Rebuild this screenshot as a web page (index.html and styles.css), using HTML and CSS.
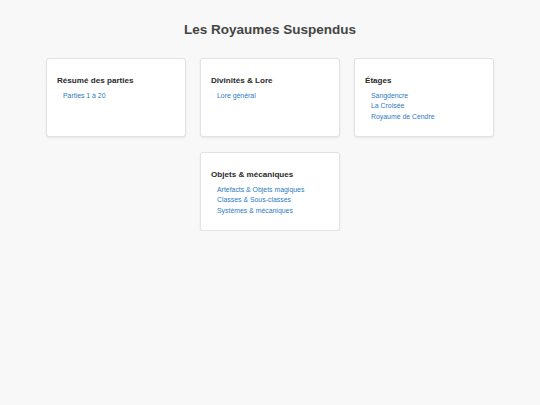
FILE: index.html
```html
<!DOCTYPE html>
<html lang="fr">
<head>
<meta charset="utf-8">
<title>Les Royaumes Suspendus</title>
<link rel="stylesheet" href="styles.css">
</head>
<body>
<h1 class="title">Les Royaumes Suspendus</h1>
<div class="grid">
  <section class="card">
    <h2 class="card-title">Résumé des parties</h2>
    <ul class="links">
      <li><a href="#">Parties 1 à 20</a></li>
    </ul>
  </section>
  <section class="card">
    <h2 class="card-title">Divinités &amp; Lore</h2>
    <ul class="links">
      <li><a href="#">Lore général</a></li>
    </ul>
  </section>
  <section class="card">
    <h2 class="card-title">Étages</h2>
    <ul class="links">
      <li><a href="#">Sangdencre</a></li>
      <li><a href="#">La Croisée</a></li>
      <li><a href="#">Royaume de Cendre</a></li>
    </ul>
  </section>
  <section class="card">
    <h2 class="card-title">Objets &amp; mécaniques</h2>
    <ul class="links">
      <li><a href="#">Artefacts &amp; Objets magiques</a></li>
      <li><a href="#">Classes &amp; Sous-classes</a></li>
      <li><a href="#">Systèmes &amp; mécaniques</a></li>
    </ul>
  </section>
</div>
</body>
</html>
```
FILE: styles.css
```css
html, body {
  margin: 0;
  padding: 0;
}
body {
  background: #f8f8f8;
  font-family: "Liberation Sans", Arial, sans-serif;
  color: #333;
}
.title {
  margin: 0;
  padding-top: 21px;
  text-align: center;
  font-size: 13.5px;
  font-weight: bold;
  color: #444;
  line-height: 18px;
}
.grid {
  display: flex;
  flex-wrap: wrap;
  justify-content: center;
  gap: 15px 14px;
  width: 448px;
  margin: 19px auto 0;
}
.card {
  box-sizing: border-box;
  width: 140px;
  height: 79px;
  background: #fff;
  border: 1px solid #e2e2e2;
  border-radius: 3px;
  box-shadow: 0 1px 2px rgba(0,0,0,0.08);
  padding: 17px 10px 0;
}
.card-title {
  margin: 0 0 5px;
  font-size: 8.1px;
  font-weight: bold;
  color: #2a2a2a;
  line-height: 10px;
}
.links {
  list-style: none;
  margin: 0;
  padding: 0 0 0 6px;
}
.links li {
  font-size: 6.9px;
  line-height: 10.4px;
}
.links a {
  color: #2b7bbf;
  text-decoration: none;
}
```
